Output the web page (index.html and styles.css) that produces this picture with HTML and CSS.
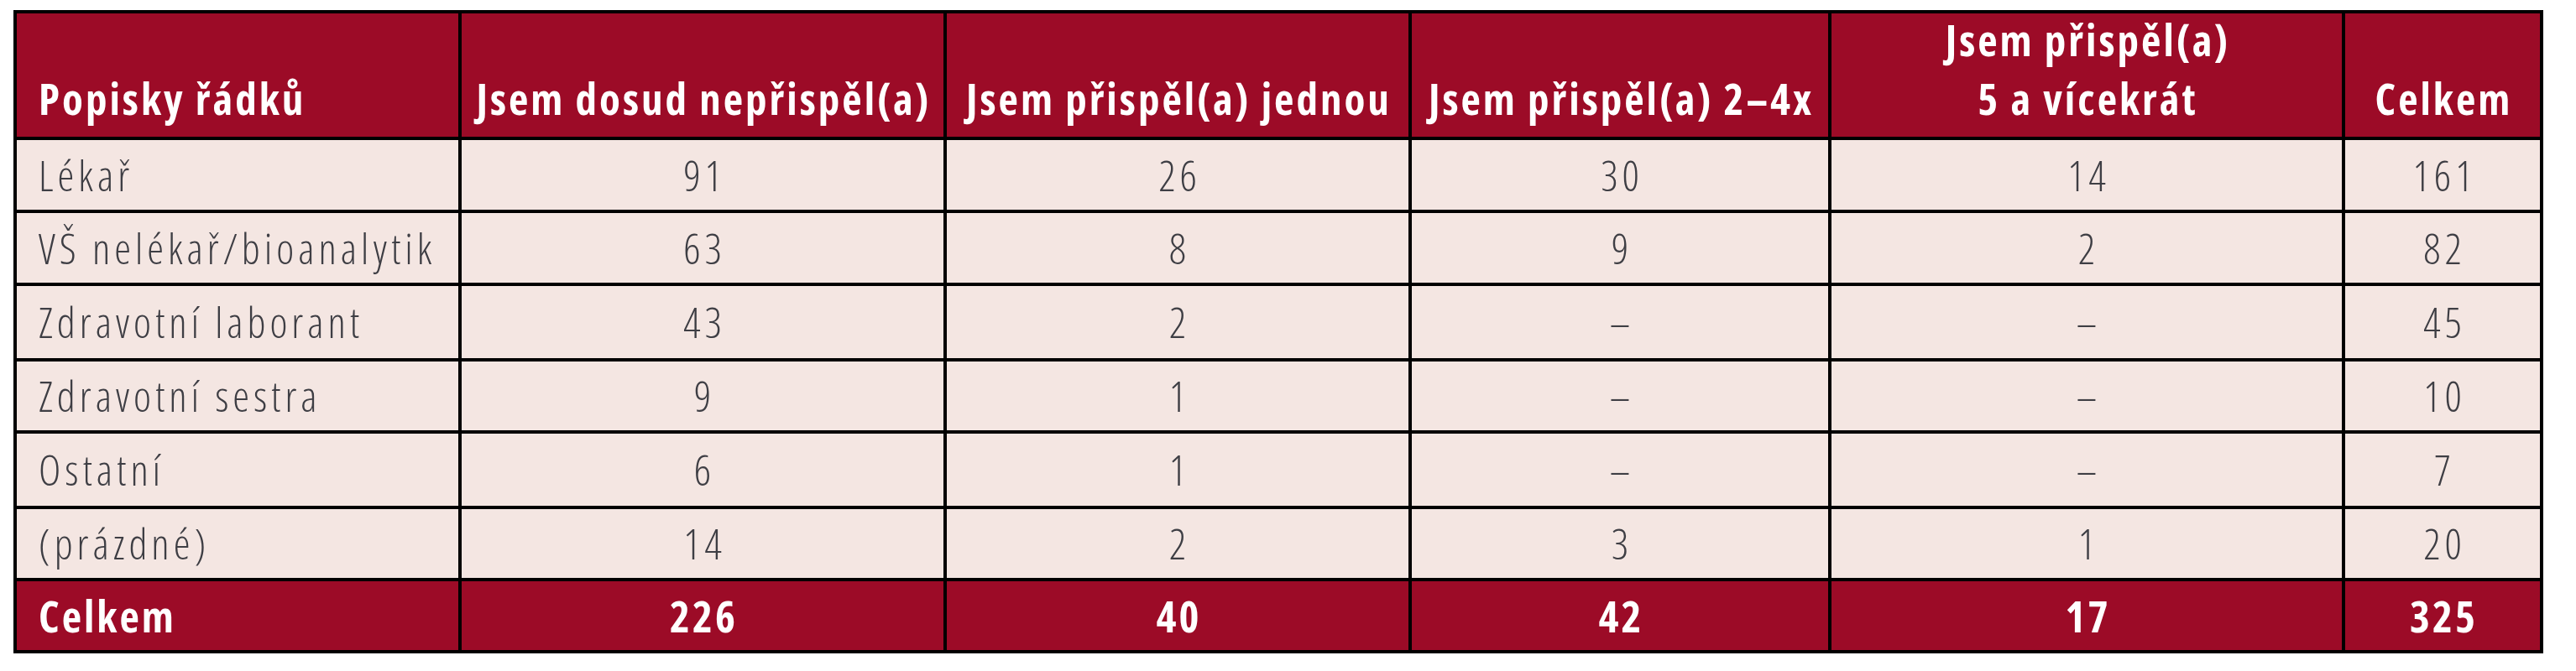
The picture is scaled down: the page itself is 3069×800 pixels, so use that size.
FILE: index.html
```html
<!DOCTYPE html>
<html lang="cs">
<head>
<meta charset="utf-8">
<title>Tabulka</title>
<link rel="stylesheet" href="styles.css">
</head>
<body>
<div class="pivot">
  <div class="cell head first">Popisky řádků</div>
  <div class="cell head">Jsem dosud nepřispěl(a)</div>
  <div class="cell head">Jsem přispěl(a) jednou</div>
  <div class="cell head">Jsem přispěl(a) 2–4x</div>
  <div class="cell head"><span class="line">Jsem přispěl(a)</span><span class="line">5 a vícekrát</span></div>
  <div class="cell head">Celkem</div>

  <div class="cell label">Lékař</div>
  <div class="cell num">91</div>
  <div class="cell num">26</div>
  <div class="cell num">30</div>
  <div class="cell num">14</div>
  <div class="cell num">161</div>

  <div class="cell label">VŠ nelékař/bioanalytik</div>
  <div class="cell num">63</div>
  <div class="cell num">8</div>
  <div class="cell num">9</div>
  <div class="cell num">2</div>
  <div class="cell num">82</div>

  <div class="cell label">Zdravotní laborant</div>
  <div class="cell num">43</div>
  <div class="cell num">2</div>
  <div class="cell num">–</div>
  <div class="cell num">–</div>
  <div class="cell num">45</div>

  <div class="cell label">Zdravotní sestra</div>
  <div class="cell num">9</div>
  <div class="cell num">1</div>
  <div class="cell num">–</div>
  <div class="cell num">–</div>
  <div class="cell num">10</div>

  <div class="cell label">Ostatní</div>
  <div class="cell num">6</div>
  <div class="cell num">1</div>
  <div class="cell num">–</div>
  <div class="cell num">–</div>
  <div class="cell num">7</div>

  <div class="cell label">(prázdné)</div>
  <div class="cell num">14</div>
  <div class="cell num">2</div>
  <div class="cell num">3</div>
  <div class="cell num">1</div>
  <div class="cell num">20</div>

  <div class="cell total first">Celkem</div>
  <div class="cell total">226</div>
  <div class="cell total">40</div>
  <div class="cell total">42</div>
  <div class="cell total">17</div>
  <div class="cell total">325</div>
</div>
</body>
</html>
```
FILE: styles.css
```css
html, body {
  margin: 0;
  padding: 0;
  background: #ffffff;
}

.pivot {
  display: grid;
  grid-template-columns: 526px 574px 550px 496px 608px 232px;
  grid-template-rows: 147px 83px 83px 86px 82px 86px 82px 82px;
  gap: 4px;
  padding: 4px;
  width: max-content;
  margin: 12px 0 0 16px;
  background: #000000;
  font-family: "Open Sans", "Noto Sans", sans-serif;
  font-stretch: 75%;
  font-size: 50px;
}

.cell {
  display: flex;
  align-items: center;
  justify-content: center;
  text-align: center;
  white-space: nowrap;
  background: #f4e6e2;
  color: #3e3e44;
  font-weight: 300;
  letter-spacing: 5px;
  line-height: 60px;
  padding-left: 5px;
}

.cell.label {
  justify-content: flex-start;
  text-align: left;
  padding-left: 26px;
}

.cell.head {
  flex-direction: column;
  align-items: center;
  justify-content: flex-end;
  padding-bottom: 11px;
  padding-left: 3px;
  background: #9c0b27;
  color: #ffffff;
  font-size: 51px;
  font-weight: 700;
  letter-spacing: 3px;
}

.cell.head .line {
  display: block;
  line-height: 70px;
}

.cell.total {
  padding-left: 3px;
  background: #9c0b27;
  color: #ffffff;
  font-size: 51px;
  font-weight: 700;
  letter-spacing: 3px;
}

.cell.first {
  justify-content: flex-start;
  text-align: left;
  padding-left: 26px;
}

.cell.head.first {
  align-items: flex-start;
  justify-content: flex-end;
}

.cell.head:not(:has(.line)) {
  line-height: 70px;
}
```
